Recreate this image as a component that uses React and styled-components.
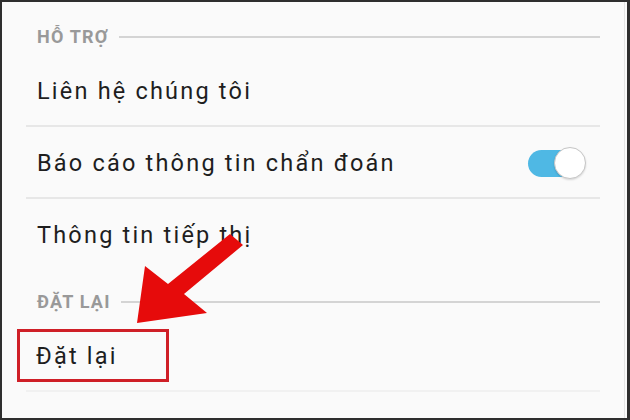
import styled, { createGlobalStyle } from "styled-components";

const GlobalStyle = createGlobalStyle`
  html, body {
    margin: 0;
    padding: 0;
    background: #fafafa;
  }
  * {
    box-sizing: border-box;
  }
`;

const Frame = styled.div`
  position: relative;
  width: 630px;
  height: 420px;
  overflow: hidden;
  background: #fafafa;
  border: 2px solid #2e2e2e;
  border-right-width: 3px;
  box-shadow: inset -2px 0 0 #fafafa, inset -3px 0 0 #e4e4e4;
  font-family: Roboto, "Noto Sans", sans-serif;
`;

const List = styled.div`
  display: flex;
  flex-direction: column;
  margin: 0 27px 0 24px;
  padding-top: 3px;
`;

const Header = styled.div`
  display: flex;
  align-items: center;
  gap: 10px;
  height: 50px;
  padding: 22px 0 8px 11px;
  color: #999999;
  font-size: 18px;
  font-weight: 700;
  letter-spacing: 1.2px;
  line-height: 20px;
`;

const HeaderLine = styled.div`
  flex: 1;
  height: 2px;
  background: #d4d4d4;
`;

const Row = styled.div`
  display: flex;
  align-items: center;
  justify-content: space-between;
  height: 71px;
  padding: 0 14px 0 11px;
  color: #1e1e1e;
  font-size: 23.5px;
  letter-spacing: 2.2px;
`;

const Divider = styled.div`
  height: 2px;
  margin-top: -1px;
  background: ${(p) => (p.faint ? "#f1f1f1" : "#e7e7e7")};
`;

const Highlight = styled.div`
  display: flex;
  align-items: center;
  width: 152px;
  height: 53px;
  margin-left: -20px;
  padding-left: 16px;
  border: 3px solid #cf1f27;
`;

const Switch = styled.div`
  position: relative;
  width: 58px;
  height: 32px;
`;

const Track = styled.div`
  position: absolute;
  left: 0;
  top: 3px;
  width: 54px;
  height: 27px;
  border-radius: 14px;
  background: #4fb8e4;
`;

const Thumb = styled.div`
  position: absolute;
  right: 0;
  top: 0;
  width: 32px;
  height: 32px;
  border-radius: 50%;
  background: #ffffff;
  border: 1.5px solid #c6c6c6;
  box-shadow: 0 1px 2px rgba(0, 0, 0, 0.15);
`;

const Arrow = styled.svg`
  position: absolute;
  left: 0;
  top: 0;
  pointer-events: none;
`;

const Toggle = () => (
  <Switch>
    <Track />
    <Thumb />
  </Switch>
);

const App = () => {
  return (
    <>
      <GlobalStyle />
      <Frame>
        <List>
          <Header>
            HỖ TRỢ
            <HeaderLine />
          </Header>
          <Row>Liên hệ chúng tôi</Row>
          <Divider />
          <Row>
            Báo cáo thông tin chẩn đoán
            <Toggle />
          </Row>
          <Divider />
          <Row>Thông tin tiếp thị</Row>
          <Header>
            ĐẶT LẠI
            <HeaderLine />
          </Header>
          <Row>
            <Highlight>Đặt lại</Highlight>
          </Row>
          <Divider faint />
        </List>
        <Arrow width="630" height="420" viewBox="2 2 630 420">
          <polygon
            points="230,234 243,245 184,294 207,313 137,323 145,266 168,284"
            fill="#e60b0b"
          />
        </Arrow>
      </Frame>
    </>
  );
};

export default App;
